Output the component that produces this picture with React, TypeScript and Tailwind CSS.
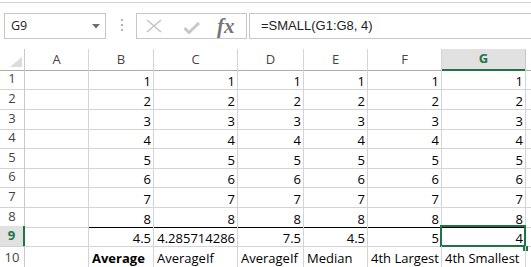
import React from "react";

const GRID = "grid grid-cols-[25px_64px_65px_84px_66px_64px_74px_84px_1fr]";
const COLS = ["A", "B", "C", "D", "E", "F", "G"];
const ROW_H = ["h-[20px]", "h-[20px]", "h-[19px]", "h-[20px]", "h-[19px]", "h-[20px]", "h-[20px]", "h-[19px]"];

const ROW9 = ["", "4.5", "4.285714286", "7.5", "4.5", "5", "4"];
const ROW10 = ["", "Average", "AverageIf", "AverageIf", "Median", "4th Largest", "4th Smallest"];

function FormulaBar() {
  return (
    <div className="mt-[2px] h-[47px] border-t border-[#d4d4d4] pt-[10px] pl-[4px] flex items-start">
      <div className="w-[102px] h-[26px] border border-[#c6c6c6] flex items-center justify-between pl-[6px] pr-[5px]">
        <span className="text-[12.5px] text-[#222] font-['Open_Sans',sans-serif]">G9</span>
        <svg width="8" height="5" viewBox="0 0 8 5">
          <polygon points="0,0 8,0 4,4.5" fill="#6f6f6f" />
        </svg>
      </div>
      <div className="ml-[15px] mt-[6px] flex flex-col gap-[3px]">
        <div className="w-[2px] h-[2px] bg-[#b4b4b4]" />
        <div className="w-[2px] h-[2px] bg-[#b4b4b4]" />
        <div className="w-[2px] h-[2px] bg-[#b4b4b4]" />
      </div>
      <div className="ml-[13px] w-[111px] h-[26px] border border-[#c6c6c6] flex items-center pl-[9px]">
        <svg width="16" height="14" viewBox="0 0 16 14">
          <path d="M1 1 L15 13 M15 1 L1 13" stroke="#c4c4c4" strokeWidth="1.6" fill="none" />
        </svg>
        <svg className="ml-[21px] mt-[3px]" width="17" height="12" viewBox="0 0 17 12">
          <path d="M1.5 6 L6 10.5 L16 1" stroke="#c8c8c8" strokeWidth="3" fill="none" />
        </svg>
        <span className="ml-[17px] text-[21px] leading-none italic font-bold text-[#767676] font-['Liberation_Serif',serif]">fx</span>
      </div>
      <div className="ml-[2px] flex-1 h-[26px] border border-r-0 border-[#c6c6c6] flex items-center pl-[11px]">
        <span className="text-[13px] text-[#222] font-['Liberation_Sans',sans-serif]">=SMALL(G1:G8, 4)</span>
      </div>
    </div>
  );
}

function HeaderRow() {
  return (
    <div className={`${GRID} h-[20px]`}>
      <div className="border-r border-b border-r-[#c8c8c8] border-b-[#ababab] flex items-end justify-end pr-[2px] pb-[3px]">
        <svg width="12" height="10" viewBox="0 0 12 10">
          <polygon points="12,0 12,10 0,10" fill="#dcdcdc" />
        </svg>
      </div>
      {COLS.map((c) =>
        c === "G" ? (
          <div key={c} className="bg-[#e1e1e1] border-r border-r-[#c8c8c8] border-b-2 border-b-[#217346] flex items-center justify-center text-[13px] font-bold text-[#217346]">
            {c}
          </div>
        ) : (
          <div key={c} className="border-r border-b border-r-[#d4d4d4] border-b-[#ababab] flex items-center justify-center text-[13px] text-[#444]">
            {c}
          </div>
        )
      )}
      <div className="border-b border-[#ababab]" />
    </div>
  );
}

function DataRow({ n, h, cells, align, boldIdx, blackBottom }: { n: number; h: string; cells: string[]; align: "left" | "right"; boldIdx?: number; blackBottom?: boolean }) {
  const active = n === 9;
  return (
    <div className={`${GRID} ${h}`}>
      {active ? (
        <div className="bg-[#e1e1e1] border-r-2 border-b border-r-[#217346] border-b-[#d4d4d4] flex items-center justify-center text-[13px] font-bold text-[#217346]">
          {n}
        </div>
      ) : (
        <div className="border-r border-b border-r-[#c8c8c8] border-b-[#d4d4d4] flex items-center justify-center text-[13px] text-[#444]">
          {n}
        </div>
      )}
      {cells.map((v, i) => {
        const black = blackBottom && i > 0;
        return (
          <div
            key={i}
            className={`relative border-r border-b border-r-[#d4d4d4] ${black ? "border-b-black" : "border-b-[#d4d4d4]"} flex items-end ${n === 10 ? "pb-[3px]" : ""} ${align === "right" ? "justify-end pr-[2px]" : "justify-start pl-[3px]"} leading-[15px] text-[13px] text-black whitespace-nowrap ${boldIdx === i ? "font-bold" : ""}`}
          >
            {v}
            {active && i === 6 && (
              <>
                <div className="absolute left-[-2px] top-[-1px] w-[86px] h-[22px] border-2 border-[#217346]" />
                <div className="absolute left-[81px] top-[20px] w-[5px] h-[5px] bg-[#217346]" />
              </>
            )}
          </div>
        );
      })}
      <div className="border-b border-[#d4d4d4]" />
    </div>
  );
}

export default function App() {
  return (
    <div className="w-[531px] h-[267px] overflow-hidden bg-white font-['Open_Sans',sans-serif]">
      <FormulaBar />
      <HeaderRow />
      {ROW_H.map((h, i) => (
        <DataRow
          key={i}
          n={i + 1}
          h={h}
          cells={["", ...Array(6).fill(String(i + 1))]}
          align="right"
          blackBottom={i === 7}
        />
      ))}
      <DataRow n={9} h="h-[20px]" cells={ROW9} align="right" />
      <DataRow n={10} h="h-[24px]" cells={ROW10} align="left" boldIdx={1} />
    </div>
  );
}
